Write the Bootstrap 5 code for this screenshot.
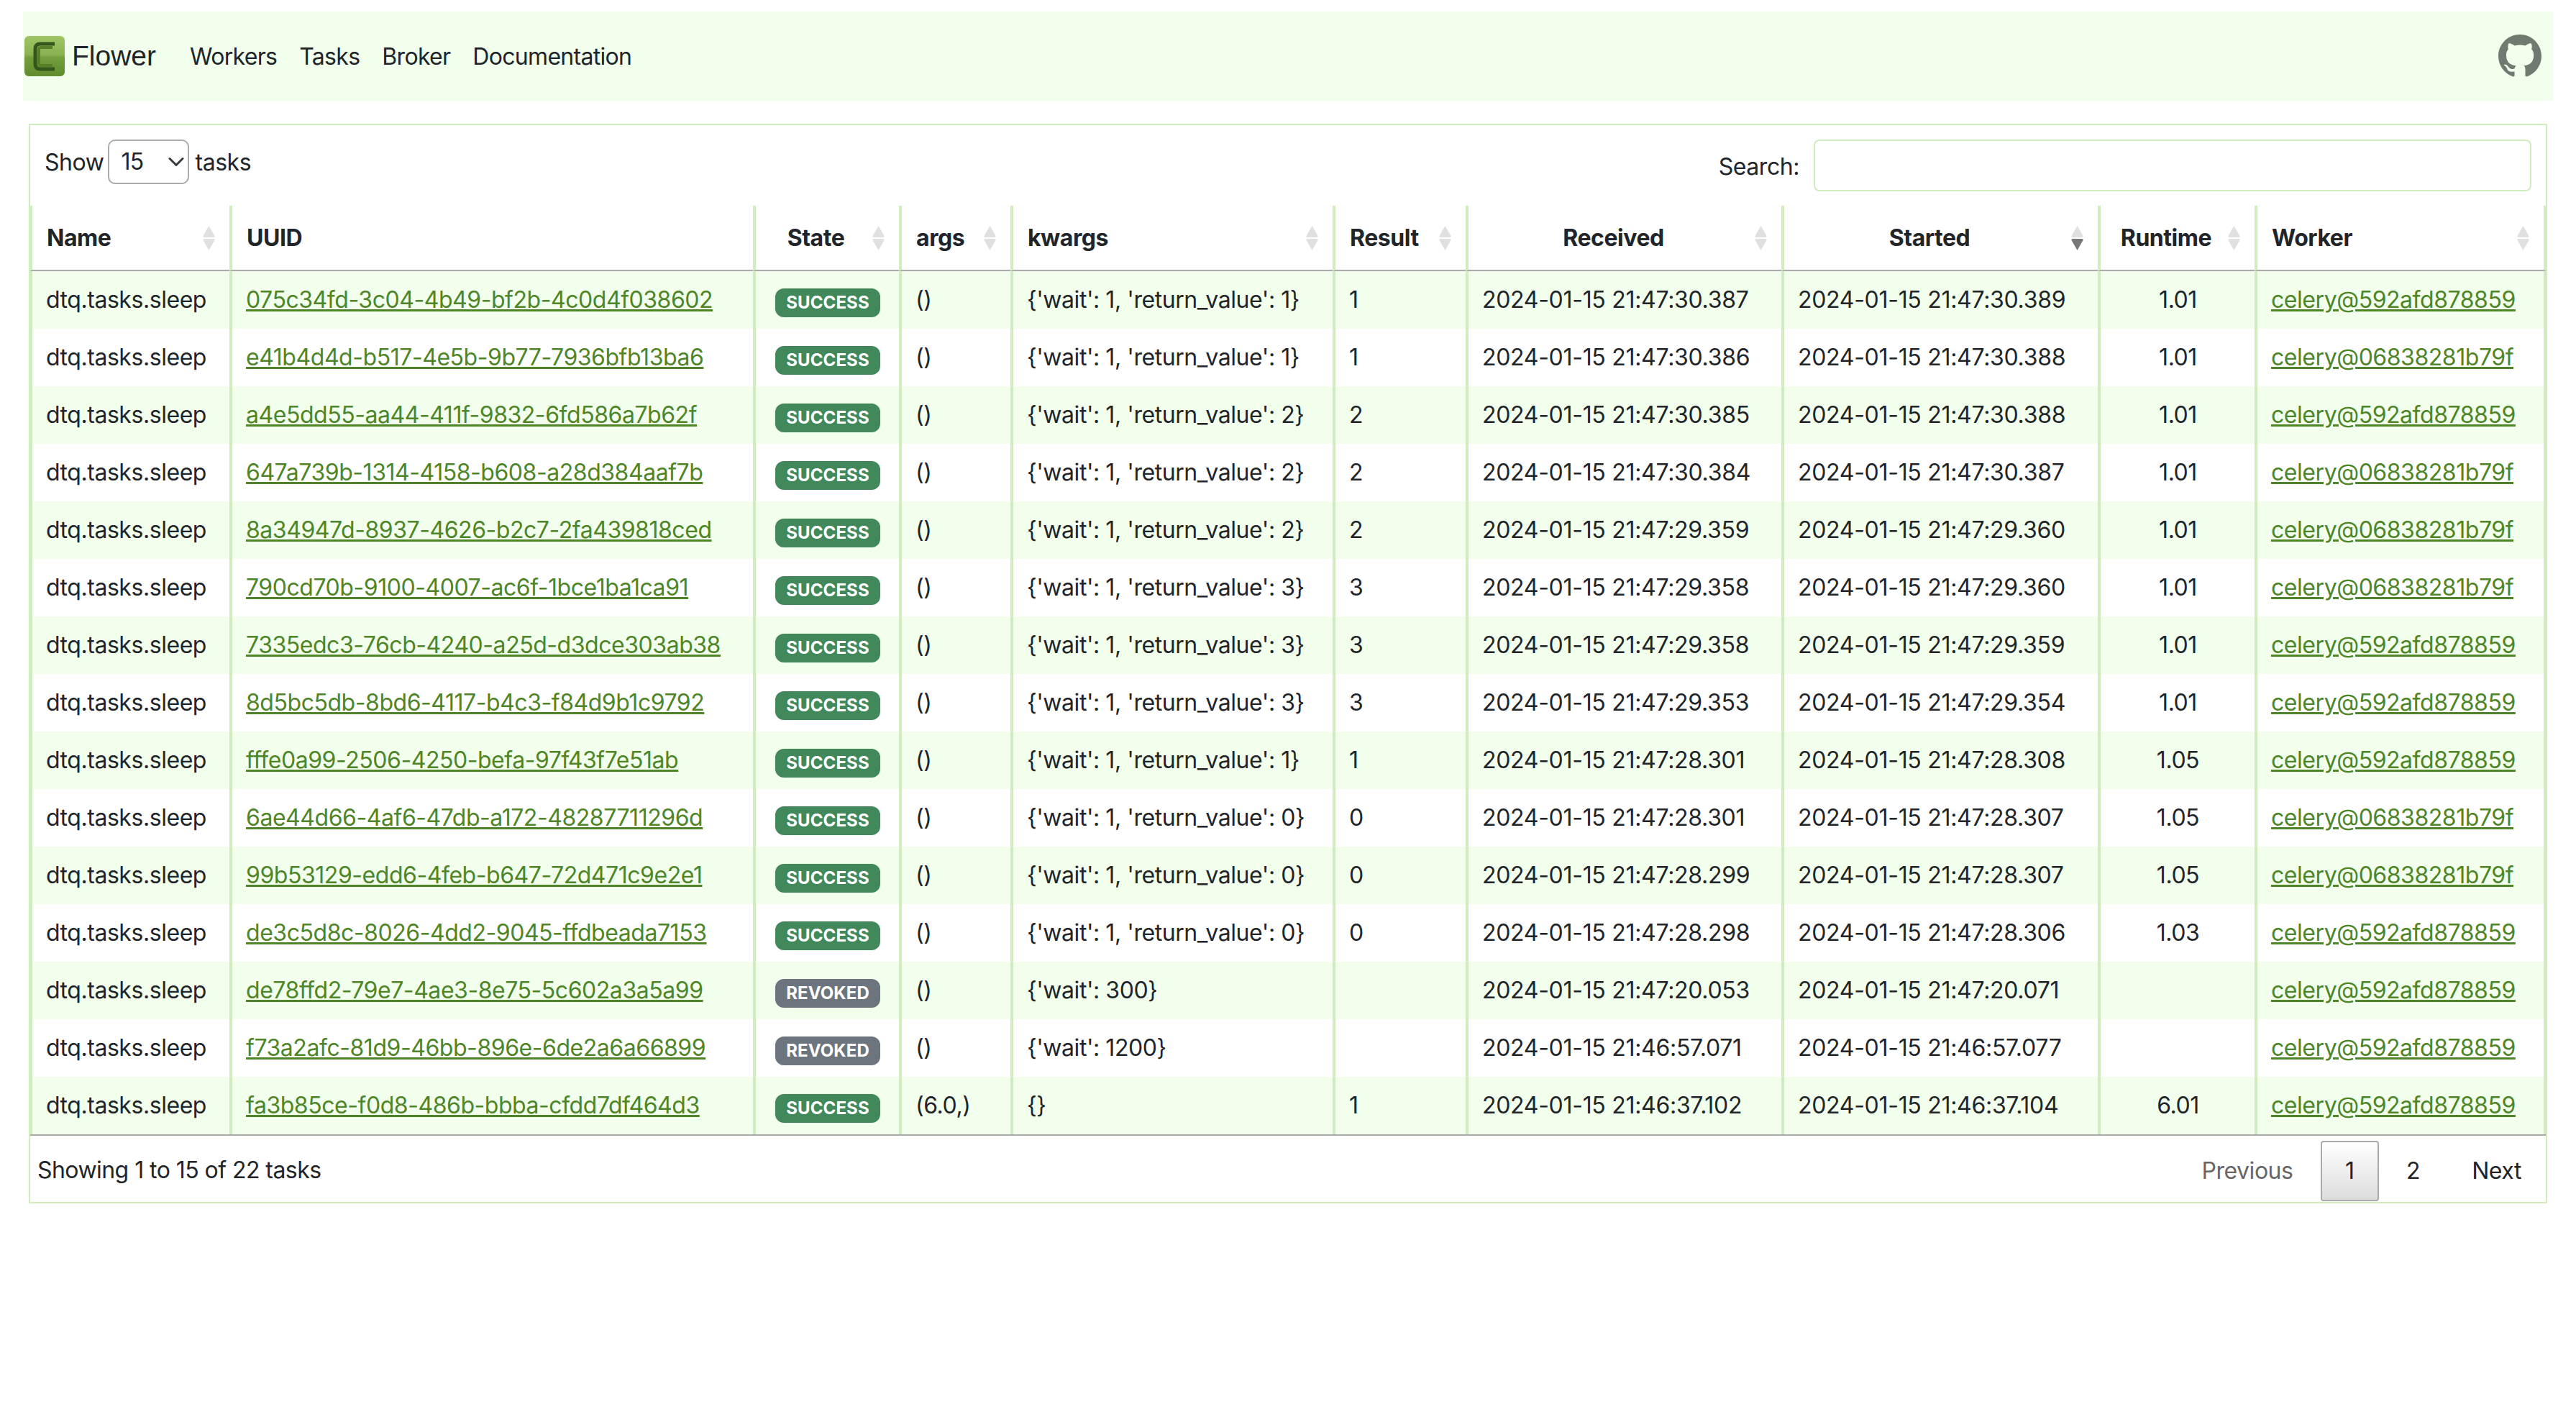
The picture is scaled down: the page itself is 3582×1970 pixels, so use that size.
<!doctype html>
<html lang="en">
<head>
<meta charset="utf-8">
<title>Flower</title>
<link href="https://cdn.jsdelivr.net/npm/bootstrap@5.3.0/dist/css/bootstrap.min.css" rel="stylesheet">
<style>
html { font-size: 32px; }
body { font-family: Inter, "Liberation Sans", sans-serif; color: #212529; background: #fff; padding: 16px 32px 0; letter-spacing: -.45px; }
a { color: #4e8527; }
.top-bar { background: #f1ffec; height: 124px; padding: 0; }
.brand-link { font-family: "Liberation Sans", Arial, sans-serif; font-size: 39px; letter-spacing: 0; color: #212529; text-decoration: none; display: flex; align-items: center; gap: 10px; margin-left: 2px; margin-right: 47px; }
.top-link { color: #212529; text-decoration: none; font-size: 32px; letter-spacing: -.7px; padding: 0; margin-right: 31px; position: relative; top: 1px; }
.gh-mark { width: 60px; height: 60px; margin-right: 16px; fill: #6f7a70; }
.tasks-box { margin: 32px 8px 0; border: 2px solid #d0edc0; height: 1501px; }
.box-head { height: 112px; padding: 20px 20px 0 20px; }
.len-select { width: 113px; height: 62px; padding: 0 0 0 16px; margin: 0 8px 0 6px; font-size: 32px; letter-spacing: -.8px; border: 2px solid #aaa; border-radius: 10px; background-size: 24px 24px; background-position: right 4px center; color: #212529; }
.len-label { margin-top: 8px; }
.search-field { width: 998px; height: 72px; border: 2px solid #d0edc0; border-radius: 8px; margin-left: 18px; }
.search-label { margin-top: 14px; margin-right: 2px; }
.task-grid { table-layout: fixed; width: 3500px; border-collapse: separate; border-spacing: 0; margin: 0 0 0 -1px; --bs-table-bg: transparent; }
.task-grid th, .task-grid td { border-left: 4px solid #d0edc0; border-bottom: 0; }
.task-grid th:last-child, .task-grid td:last-child { border-right: 4px solid #d0edc0; }
.task-grid th { height: 91px; padding: 20px 52px 20px 20px; font-weight: 700; position: relative; border-bottom: 2px solid #aaa; white-space: nowrap; vertical-align: middle; }
.task-grid td { height: 80px; padding: 16px 18px 16px 19px; white-space: nowrap; vertical-align: middle; box-shadow: none; }
.task-grid tbody tr:nth-child(odd) td { background: #f1ffec; }
.task-grid td.stamp-cell { letter-spacing: -.3px; }
.sort-mark { position: absolute; right: 20px; top: 27px; width: 17px; height: 36px; }
.th-runtime { padding-right: 44px !important; padding-left: 12px !important; }
.task-badge { font-size: 24px; letter-spacing: .1px; display: inline-block; position: relative; top: 1px; }
.badge-ok { background: #41885a; }
.box-foot { height: 92px; border-top: 2px solid #aaa; padding: 0 0 0 10px; }
.foot-info { margin-top: 24px; letter-spacing: -.55px; }
.page-row { margin: 7px 0 0; padding: 0; list-style: none; }
.page-row a { display: block; padding: 16px 32px; border: 2px solid transparent; color: #212529; text-decoration: none; margin-left: 4px; border-radius: 4px; }
.page-row a.page-off { color: #666; }
.page-row a.page-on { border-color: #aaa; background: linear-gradient(to bottom, #fff, #dcdcdc); padding: 16px 32.5px; }
</style>
</head>
<body>
<nav class="navbar top-bar d-flex align-items-center justify-content-start flex-nowrap">
  <a class="brand-link" href="#">
    <svg width="56" height="56" viewBox="0 0 56 56" aria-hidden="true">
      <defs>
        <linearGradient id="lg" x1="0" y1="0" x2="0" y2="1">
          <stop offset="0" stop-color="#a0c566"/><stop offset=".46" stop-color="#8ab251"/><stop offset=".54" stop-color="#739e3c"/><stop offset="1" stop-color="#5f8c2e"/>
        </linearGradient>
      </defs>
      <rect width="56" height="56" rx="6" fill="url(#lg)"/>
      <path d="M42 11 H22 Q15 11 15 18 V39 Q15 46 22 46 H42" fill="none" stroke="#33561a" stroke-width="5"/>
      <path d="M39 16 H23 Q20 16 20 19 V38 Q20 41 23 41 H39" fill="none" stroke="#567f28" stroke-width="4"/>
    </svg>
    <span>Flower</span>
  </a>
  <a class="top-link" href="#">Workers</a>
  <a class="top-link" href="#">Tasks</a>
  <a class="top-link" href="#">Broker</a>
  <a class="top-link" href="#">Documentation</a>
  <a class="ms-auto d-flex" href="#" aria-label="GitHub">
    <svg class="gh-mark" viewBox="0 0 16 16" aria-hidden="true"><path d="M8 0C3.58 0 0 3.58 0 8c0 3.54 2.29 6.53 5.47 7.59.4.07.55-.17.55-.38 0-.19-.01-.82-.01-1.49-2.01.37-2.53-.49-2.69-.94-.09-.23-.48-.94-.82-1.13-.28-.15-.68-.52-.01-.53.63-.01 1.08.58 1.23.82.72 1.21 1.87.87 2.33.66.07-.52.28-.87.51-1.07-1.78-.2-3.64-.89-3.64-3.95 0-.87.31-1.59.82-2.15-.08-.2-.36-1.02.08-2.12 0 0 .67-.21 2.2.82.64-.18 1.32-.27 2-.27.68 0 1.36.09 2 .27 1.53-1.04 2.2-.82 2.2-.82.44 1.1.16 1.92.08 2.12.51.56.82 1.27.82 2.15 0 3.07-1.87 3.75-3.65 3.95.29.25.54.73.54 1.48 0 1.07-.01 1.93-.01 2.2 0 .21.15.46.55.38A8.013 8.013 0 0016 8c0-4.42-3.58-8-8-8z"/></svg>
  </a>
</nav>

<div class="tasks-box">
  <div class="box-head d-flex justify-content-between align-items-start">
    <div class="d-flex align-items-start">
      <span class="len-label">Show</span>
      <select class="form-select len-select" aria-label="Show"><option>15</option><option>30</option><option>50</option></select>
      <span class="len-label">tasks</span>
    </div>
    <div class="d-flex align-items-start">
      <label class="search-label" for="q">Search:</label>
      <input class="form-control search-field" id="q" type="search">
    </div>
  </div>
  <table class="table task-grid mb-0">
    <colgroup>
      <col style="width:278px"><col style="width:728px"><col style="width:203px"><col style="width:155px"><col style="width:448px"><col style="width:185px"><col style="width:439px"><col style="width:440px"><col style="width:218px"><col style="width:406px">
    </colgroup>
    <thead>
      <tr>
        <th>Name<svg class="sort-mark" viewBox="0 0 17 36"><path d="M8.5 1 16.5 15Q17 17 15 17H2Q0 17 .5 15Z" fill="#e0e0e0"/><path d="M8.5 35 16.5 21Q17 19 15 19H2Q0 19 .5 21Z" fill="#e0e0e0"/></svg></th>
        <th>UUID</th>
        <th class="text-center">State<svg class="sort-mark" viewBox="0 0 17 36"><path d="M8.5 1 16.5 15Q17 17 15 17H2Q0 17 .5 15Z" fill="#e0e0e0"/><path d="M8.5 35 16.5 21Q17 19 15 19H2Q0 19 .5 21Z" fill="#e0e0e0"/></svg></th>
        <th>args<svg class="sort-mark" viewBox="0 0 17 36"><path d="M8.5 1 16.5 15Q17 17 15 17H2Q0 17 .5 15Z" fill="#e0e0e0"/><path d="M8.5 35 16.5 21Q17 19 15 19H2Q0 19 .5 21Z" fill="#e0e0e0"/></svg></th>
        <th>kwargs<svg class="sort-mark" viewBox="0 0 17 36"><path d="M8.5 1 16.5 15Q17 17 15 17H2Q0 17 .5 15Z" fill="#e0e0e0"/><path d="M8.5 35 16.5 21Q17 19 15 19H2Q0 19 .5 21Z" fill="#e0e0e0"/></svg></th>
        <th>Result<svg class="sort-mark" viewBox="0 0 17 36"><path d="M8.5 1 16.5 15Q17 17 15 17H2Q0 17 .5 15Z" fill="#e0e0e0"/><path d="M8.5 35 16.5 21Q17 19 15 19H2Q0 19 .5 21Z" fill="#e0e0e0"/></svg></th>
        <th class="text-center">Received<svg class="sort-mark" viewBox="0 0 17 36"><path d="M8.5 1 16.5 15Q17 17 15 17H2Q0 17 .5 15Z" fill="#e0e0e0"/><path d="M8.5 35 16.5 21Q17 19 15 19H2Q0 19 .5 21Z" fill="#e0e0e0"/></svg></th>
        <th class="text-center">Started<svg class="sort-mark" viewBox="0 0 17 36"><path d="M8.5 1 16.5 15Q17 17 15 17H2Q0 17 .5 15Z" fill="#e0e0e0"/><path d="M8.5 35 16.5 21Q17 19 15 19H2Q0 19 .5 21Z" fill="#777"/></svg></th>
        <th class="text-center th-runtime">Runtime<svg class="sort-mark" viewBox="0 0 17 36"><path d="M8.5 1 16.5 15Q17 17 15 17H2Q0 17 .5 15Z" fill="#e0e0e0"/><path d="M8.5 35 16.5 21Q17 19 15 19H2Q0 19 .5 21Z" fill="#e0e0e0"/></svg></th>
        <th>Worker<svg class="sort-mark" viewBox="0 0 17 36"><path d="M8.5 1 16.5 15Q17 17 15 17H2Q0 17 .5 15Z" fill="#e0e0e0"/><path d="M8.5 35 16.5 21Q17 19 15 19H2Q0 19 .5 21Z" fill="#e0e0e0"/></svg></th>
      </tr>
    </thead>
    <tbody>
      <tr><td>dtq.tasks.sleep</td><td><a href="#">075c34fd-3c04-4b49-bf2b-4c0d4f038602</a></td><td class="text-center"><span class="badge badge-ok task-badge">SUCCESS</span></td><td>()</td><td>{'wait': 1, 'return_value': 1}</td><td>1</td><td class="stamp-cell">2024-01-15 21:47:30.387</td><td class="stamp-cell">2024-01-15 21:47:30.389</td><td class="text-center">1.01</td><td><a href="#">celery@592afd878859</a></td></tr>
      <tr><td>dtq.tasks.sleep</td><td><a href="#">e41b4d4d-b517-4e5b-9b77-7936bfb13ba6</a></td><td class="text-center"><span class="badge badge-ok task-badge">SUCCESS</span></td><td>()</td><td>{'wait': 1, 'return_value': 1}</td><td>1</td><td class="stamp-cell">2024-01-15 21:47:30.386</td><td class="stamp-cell">2024-01-15 21:47:30.388</td><td class="text-center">1.01</td><td><a href="#">celery@06838281b79f</a></td></tr>
      <tr><td>dtq.tasks.sleep</td><td><a href="#">a4e5dd55-aa44-411f-9832-6fd586a7b62f</a></td><td class="text-center"><span class="badge badge-ok task-badge">SUCCESS</span></td><td>()</td><td>{'wait': 1, 'return_value': 2}</td><td>2</td><td class="stamp-cell">2024-01-15 21:47:30.385</td><td class="stamp-cell">2024-01-15 21:47:30.388</td><td class="text-center">1.01</td><td><a href="#">celery@592afd878859</a></td></tr>
      <tr><td>dtq.tasks.sleep</td><td><a href="#">647a739b-1314-4158-b608-a28d384aaf7b</a></td><td class="text-center"><span class="badge badge-ok task-badge">SUCCESS</span></td><td>()</td><td>{'wait': 1, 'return_value': 2}</td><td>2</td><td class="stamp-cell">2024-01-15 21:47:30.384</td><td class="stamp-cell">2024-01-15 21:47:30.387</td><td class="text-center">1.01</td><td><a href="#">celery@06838281b79f</a></td></tr>
      <tr><td>dtq.tasks.sleep</td><td><a href="#">8a34947d-8937-4626-b2c7-2fa439818ced</a></td><td class="text-center"><span class="badge badge-ok task-badge">SUCCESS</span></td><td>()</td><td>{'wait': 1, 'return_value': 2}</td><td>2</td><td class="stamp-cell">2024-01-15 21:47:29.359</td><td class="stamp-cell">2024-01-15 21:47:29.360</td><td class="text-center">1.01</td><td><a href="#">celery@06838281b79f</a></td></tr>
      <tr><td>dtq.tasks.sleep</td><td><a href="#">790cd70b-9100-4007-ac6f-1bce1ba1ca91</a></td><td class="text-center"><span class="badge badge-ok task-badge">SUCCESS</span></td><td>()</td><td>{'wait': 1, 'return_value': 3}</td><td>3</td><td class="stamp-cell">2024-01-15 21:47:29.358</td><td class="stamp-cell">2024-01-15 21:47:29.360</td><td class="text-center">1.01</td><td><a href="#">celery@06838281b79f</a></td></tr>
      <tr><td>dtq.tasks.sleep</td><td><a href="#">7335edc3-76cb-4240-a25d-d3dce303ab38</a></td><td class="text-center"><span class="badge badge-ok task-badge">SUCCESS</span></td><td>()</td><td>{'wait': 1, 'return_value': 3}</td><td>3</td><td class="stamp-cell">2024-01-15 21:47:29.358</td><td class="stamp-cell">2024-01-15 21:47:29.359</td><td class="text-center">1.01</td><td><a href="#">celery@592afd878859</a></td></tr>
      <tr><td>dtq.tasks.sleep</td><td><a href="#">8d5bc5db-8bd6-4117-b4c3-f84d9b1c9792</a></td><td class="text-center"><span class="badge badge-ok task-badge">SUCCESS</span></td><td>()</td><td>{'wait': 1, 'return_value': 3}</td><td>3</td><td class="stamp-cell">2024-01-15 21:47:29.353</td><td class="stamp-cell">2024-01-15 21:47:29.354</td><td class="text-center">1.01</td><td><a href="#">celery@592afd878859</a></td></tr>
      <tr><td>dtq.tasks.sleep</td><td><a href="#">fffe0a99-2506-4250-befa-97f43f7e51ab</a></td><td class="text-center"><span class="badge badge-ok task-badge">SUCCESS</span></td><td>()</td><td>{'wait': 1, 'return_value': 1}</td><td>1</td><td class="stamp-cell">2024-01-15 21:47:28.301</td><td class="stamp-cell">2024-01-15 21:47:28.308</td><td class="text-center">1.05</td><td><a href="#">celery@592afd878859</a></td></tr>
      <tr><td>dtq.tasks.sleep</td><td><a href="#">6ae44d66-4af6-47db-a172-48287711296d</a></td><td class="text-center"><span class="badge badge-ok task-badge">SUCCESS</span></td><td>()</td><td>{'wait': 1, 'return_value': 0}</td><td>0</td><td class="stamp-cell">2024-01-15 21:47:28.301</td><td class="stamp-cell">2024-01-15 21:47:28.307</td><td class="text-center">1.05</td><td><a href="#">celery@06838281b79f</a></td></tr>
      <tr><td>dtq.tasks.sleep</td><td><a href="#">99b53129-edd6-4feb-b647-72d471c9e2e1</a></td><td class="text-center"><span class="badge badge-ok task-badge">SUCCESS</span></td><td>()</td><td>{'wait': 1, 'return_value': 0}</td><td>0</td><td class="stamp-cell">2024-01-15 21:47:28.299</td><td class="stamp-cell">2024-01-15 21:47:28.307</td><td class="text-center">1.05</td><td><a href="#">celery@06838281b79f</a></td></tr>
      <tr><td>dtq.tasks.sleep</td><td><a href="#">de3c5d8c-8026-4dd2-9045-ffdbeada7153</a></td><td class="text-center"><span class="badge badge-ok task-badge">SUCCESS</span></td><td>()</td><td>{'wait': 1, 'return_value': 0}</td><td>0</td><td class="stamp-cell">2024-01-15 21:47:28.298</td><td class="stamp-cell">2024-01-15 21:47:28.306</td><td class="text-center">1.03</td><td><a href="#">celery@592afd878859</a></td></tr>
      <tr><td>dtq.tasks.sleep</td><td><a href="#">de78ffd2-79e7-4ae3-8e75-5c602a3a5a99</a></td><td class="text-center"><span class="badge bg-secondary task-badge">REVOKED</span></td><td>()</td><td>{'wait': 300}</td><td></td><td class="stamp-cell">2024-01-15 21:47:20.053</td><td class="stamp-cell">2024-01-15 21:47:20.071</td><td class="text-center"></td><td><a href="#">celery@592afd878859</a></td></tr>
      <tr><td>dtq.tasks.sleep</td><td><a href="#">f73a2afc-81d9-46bb-896e-6de2a6a66899</a></td><td class="text-center"><span class="badge bg-secondary task-badge">REVOKED</span></td><td>()</td><td>{'wait': 1200}</td><td></td><td class="stamp-cell">2024-01-15 21:46:57.071</td><td class="stamp-cell">2024-01-15 21:46:57.077</td><td class="text-center"></td><td><a href="#">celery@592afd878859</a></td></tr>
      <tr><td>dtq.tasks.sleep</td><td><a href="#">fa3b85ce-f0d8-486b-bbba-cfdd7df464d3</a></td><td class="text-center"><span class="badge badge-ok task-badge">SUCCESS</span></td><td>(6.0,)</td><td>{}</td><td>1</td><td class="stamp-cell">2024-01-15 21:46:37.102</td><td class="stamp-cell">2024-01-15 21:46:37.104</td><td class="text-center">6.01</td><td><a href="#">celery@592afd878859</a></td></tr>
    </tbody>
  </table>
  <div class="box-foot d-flex justify-content-between align-items-start">
    <div class="foot-info">Showing 1 to 15 of 22 tasks</div>
    <ul class="page-row d-flex">
      <li><a class="page-off" href="#">Previous</a></li>
      <li><a class="page-on" href="#">1</a></li>
      <li><a href="#">2</a></li>
      <li><a href="#">Next</a></li>
    </ul>
  </div>
</div>
<script src="https://cdn.jsdelivr.net/npm/bootstrap@5.3.0/dist/js/bootstrap.bundle.min.js"></script>
</body>
</html>
